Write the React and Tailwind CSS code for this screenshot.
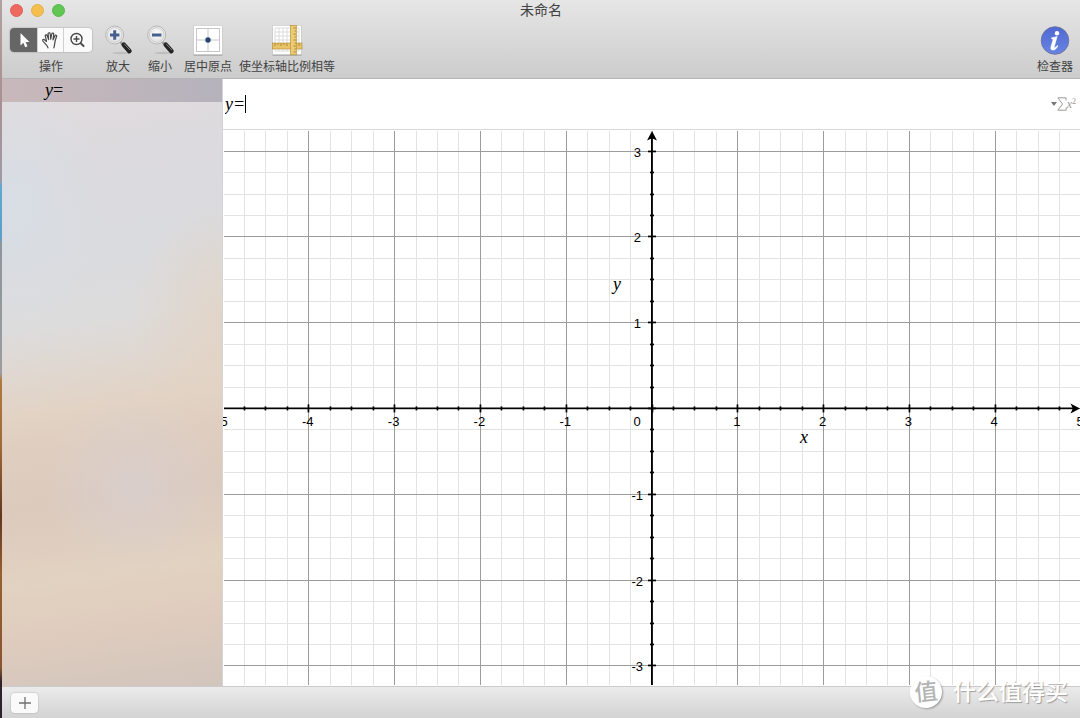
import { useState } from "react";

const UNIT = 85.8;
const WIDTH = 857;
const HEIGHT = 556;
const OX = 429;
const OY = 278;

const range = (from, to) =>
  Array.from({ length: to - from + 1 }, (_, i) => from + i);

const columns = range(-19, 19).map((n) => ({ n, pos: Math.floor(OX + (n * UNIT) / 4) }));
const rows = range(-12, 12).map((n) => ({ n, pos: Math.round(OY - (n * UNIT) / 4) }));
const isMajor = ({ n }) => n % 4 === 0;
const isMinor = ({ n }) => n % 4 !== 0;

function Graph() {
  return (
    <svg
      className="block h-full w-full"
      viewBox={`0 0 ${WIDTH} ${HEIGHT}`}
      preserveAspectRatio="xMidYMid slice"
      role="img"
      aria-label="坐标系"
    >
      <g shapeRendering="crispEdges">
        {columns.filter(isMinor).map((c) => (
          <rect key={c.n} x={c.pos} y="1" width="1" height={HEIGHT - 2} fill="#e3e3e3" />
        ))}
        {rows.filter(isMinor).map((r) => (
          <rect key={r.n} x="1" y={r.pos} width={WIDTH} height="1" fill="#e3e3e3" />
        ))}
        {columns.filter(isMajor).map((c) => (
          <rect key={c.n} x={c.pos} y="1" width="1" height={HEIGHT - 2} fill="#9c9c9c" />
        ))}
        {rows.filter(isMajor).map((r) => (
          <rect key={r.n} x="1" y={r.pos} width={WIDTH} height="1" fill="#9c9c9c" />
        ))}
      </g>
      <g fill="#000">
        <rect x={OX - 1} y="6" width="1.8" height={HEIGHT - 7} />
        <rect x="1" y={OY - 0.5} width={WIDTH - 7} height="1.7" />
        <path d={`M${OX} 1 L${OX + 5} 10.5 L${OX} 8.2 L${OX - 5} 10.5Z`} />
        <path d={`M${WIDTH} ${OY + 0.4} l-9.5 -5 l2.3 5 l-2.3 5Z`} />
        {columns.map((c) => (
          <rect
            key={c.n}
            x={c.pos - 0.4}
            y={OY + 0.4 - (isMajor(c) ? 4 : 2)}
            width="1.7"
            height={isMajor(c) ? 8 : 4}
          />
        ))}
        {rows.map((r) => (
          <rect
            key={r.n}
            x={OX - (isMajor(r) ? 4 : 2)}
            y={r.pos - 0.4}
            width={isMajor(r) ? 8 : 4}
            height="1.7"
          />
        ))}
      </g>
      <g className="font-['Liberation_Sans',Arial,sans-serif] text-[13px]" fill="#000">
        {[-5, -4, -3, -2, -1, 1, 2, 3, 4, 5].map((n) => (
          <text key={n} x={OX + n * UNIT - 1} y="296" textAnchor="middle">
            {n}
          </text>
        ))}
        <text x="414" y="296" textAnchor="middle">0</text>
        {[-3, -2, -1, 1, 2, 3].map((n) => (
          <text key={n} x={n < 0 ? 420 : 418} y={OY - n * UNIT + 6} textAnchor="end">
            {n}
          </text>
        ))}
      </g>
      <g className="font-['Liberation_Serif','Times_New_Roman',serif] text-[18px] italic" fill="#000">
        <text x="390" y="160">y</text>
        <text x="577" y="313">x</text>
      </g>
    </svg>
  );
}

function Magnifier({ plus, id }) {
  return (
    <svg className="h-8 w-8" viewBox="0 0 32 32" aria-hidden="true">
      <defs>
        <radialGradient id={id} cx="50%" cy="40%" r="60%">
          <stop offset="0" stopColor="#fff" />
          <stop offset="1" stopColor="#e0e0e0" />
        </radialGradient>
      </defs>
      <ellipse cx="19" cy="29" rx="9" ry="1.2" fill="#b5b5b5" opacity=".7" />
      <path d="M18 17.500l3.500 3.800" stroke="#999" strokeWidth="2.500" />
      <path d="M21.800 20.800l5.600 6.300" stroke="#242424" strokeWidth="4.600" strokeLinecap="round" />
      <path d="M22.500 20.200l5.200 5.600" stroke="#808080" strokeWidth="1" strokeLinecap="round" />
      <circle cx="12.700" cy="11" r="9" fill="#ececec" stroke="#b0b0b0" strokeWidth=".9" />
      <circle cx="12.700" cy="11" r="7.300" fill={`url(#${id})`} stroke="#c6c6c6" strokeWidth=".8" />
      <path d={plus ? "M8 11h9.400M12.700 6.300v9.400" : "M8 11h9.400"} stroke="#47618f" strokeWidth="3" />
    </svg>
  );
}

function OriginIcon() {
  return (
    <svg className="h-8 w-8" viewBox="0 0 32 32" aria-hidden="true">
      <rect x="1.2" y="2.800" width="29.600" height="29" rx="1" fill="#a6a6a6" />
      <rect x="1.500" y="1.500" width="29" height="29" fill="#fff" stroke="#c9c9c9" strokeWidth=".6" />
      <rect x="4.500" y="4.500" width="23" height="23" fill="none" stroke="#c6c6c6" />
      <path d="M16 4.500v23M4.500 16h23" stroke="#bdbdbd" strokeWidth=".8" />
      <circle cx="16" cy="16" r="2.700" fill="#25476d" />
    </svg>
  );
}

function RulerIcon() {
  return (
    <svg className="h-8 w-8" viewBox="0 0 32 32" aria-hidden="true">
      <rect x="1.2" y="2.800" width="29.600" height="29" rx="1" fill="#a6a6a6" />
      <rect x="1.500" y="1.500" width="29" height="29" fill="#fff" stroke="#c9c9c9" strokeWidth=".6" />
      <path
        d="M4 4h24v23h-24zM8 4v23M12 4v23M16 4v23M20 4v23M24 4v23M4 8h24M4 12h24M4 16h24M4 20h24M4 24h24"
        fill="none"
        stroke="#d4d4d4"
        strokeWidth=".8"
      />
      <rect x="1.500" y="19" width="29.500" height="6" fill="#e8c466" stroke="#b08a38" strokeWidth=".6" />
      <path d="M4 19.500v2.500M7 19.500v1.500M10 19.500v2.500M13 19.500v1.500M16 19.500v2.500M28 19.500v2.500" stroke="#8f6e28" strokeWidth=".7" />
      <rect x="19.500" y="1.300" width="6" height="29.500" fill="#eccb72" stroke="#b08a38" strokeWidth=".6" />
      <path
        d="M25 4h-2.500M25 7h-1.500M25 10h-2.500M25 13h-1.500M25 16h-2.500M25 19h-1.500M25 22h-2.500M25 25h-1.500M25 28h-2.500"
        stroke="#8f6e28"
        strokeWidth=".7"
      />
    </svg>
  );
}

function InfoIcon() {
  return (
    <svg className="h-8 w-8" viewBox="0 0 32 32" aria-hidden="true">
      <defs>
        <linearGradient id="info" x1="0" y1="0" x2="0" y2="1">
          <stop offset="0" stopColor="#5069d2" />
          <stop offset="1" stopColor="#6884e2" />
        </linearGradient>
      </defs>
      <circle cx="16" cy="16.500" r="13.800" fill="url(#info)" stroke="#6c73a0" strokeWidth=".9" />
      <circle cx="18" cy="9.200" r="2.200" fill="#fff" />
      <path
        d="M12.600 13.700c2-.3 3.900-.8 5.600-1.300l-2.700 9.500c-.3 1.200 0 1.600.5 1.500.7-.1 1.500-1 2.200-2l.8.5c-1.600 2.800-3.200 4.200-5.100 4.200-1.800 0-2.600-1.200-2-3.100l1.900-6.600c.3-1.100-.2-1.500-1.300-1.800z"
        fill="#fff"
        stroke="#fff"
        strokeWidth=".5"
      />
    </svg>
  );
}

const tools = [
  {
    id: "pointer",
    label: "选择",
    width: "w-7",
    icon: (
      <svg className="h-5 w-5" viewBox="0 0 20 20" aria-hidden="true">
        <path d="M6.500 3v12.400l2.800-2.600 1.900 4.400 2.300-1-1.900-4.300h3.900z" fill="currentColor" />
      </svg>
    ),
  },
  {
    id: "hand",
    label: "移动",
    width: "w-[26px]",
    icon: (
      <svg className="h-5 w-5" viewBox="0 0 20 20" fill="none" stroke="currentColor" strokeWidth="1.200" strokeLinecap="round" strokeLinejoin="round" aria-hidden="true">
        <path d="M7 17.800c-.4-1.700-1.700-2.900-2.800-4.100-1-1.100-1.900-2.100-2.400-3-.6-1.200.9-1.700 1.700-1 .7.600 1.300 1.300 2 1.700-.2-1.800-.8-3.500-1.200-5.200-.4-1.400 1.400-1.900 1.900-.5l1.400 3.900-.5-5.700c-.1-1.500 1.900-1.600 2.100-.1l.5 5.400 1-5.200c.3-1.400 2.200-1.100 2 .3l-.7 5.500 1.900-3.900c.6-1.200 2.200-.6 1.700.7-.8 2.100-1.500 3.700-1.700 5.800-.2 2-.6 3.500-1 5.400" />
      </svg>
    ),
  },
  {
    id: "zoom",
    label: "缩放",
    width: "w-7",
    icon: (
      <svg className="h-5 w-5" viewBox="0 0 20 20" fill="none" stroke="currentColor" aria-hidden="true">
        <circle cx="8.500" cy="9" r="5.500" strokeWidth="1.400" />
        <path d="M5.500 9h6M8.500 6v6" strokeWidth="1.400" />
        <path d="M12.500 13l3.600 3.600" strokeWidth="2" />
      </svg>
    ),
  },
];

function ToolbarButton({ label, width, children }) {
  return (
    <button type="button" className={`flex flex-col items-center gap-[3px] ${width}`}>
      {children}
      <span className="text-xs leading-4 whitespace-nowrap">{label}</span>
    </button>
  );
}

export default function App() {
  const [tool, setTool] = useState("pointer");
  const [formula, setFormula] = useState("y=");

  return (
    <div className="relative flex h-screen overflow-hidden bg-white font-['Liberation_Sans','Noto_Sans_CJK_SC',sans-serif] text-[#424242]">
      <div className="w-0.5 shrink-0 bg-[linear-gradient(#b3a0a0_0,#a98f93_14%,#a09aa5_25%,#62a8d0_26%,#5b9fca_33%,#8f959c_34%,#9a9ca0_52%,#b07a3c_53%,#a06a38_62%,#65351f_72%,#96602f_80%,#8a552e_93%,#30222a_95%,#30222a)]" />
      <div className="flex min-w-0 flex-1 flex-col">
        <header className="flex h-[79px] shrink-0 flex-col border-b border-[#b4b4b4] bg-linear-to-b from-[#e6e6e6] to-[#cccccc]">
          <div className="grid h-5 grid-cols-[1fr_auto_1fr] items-center">
            <div className="flex gap-2 pl-2">
              <button type="button" aria-label="关闭" className="h-[13px] w-[13px] rounded-full border border-[#dc6057] bg-[#ee6a60]" />
              <button type="button" aria-label="最小化" className="h-[13px] w-[13px] rounded-full border border-[#e2ae4a] bg-[#f5bf50]" />
              <button type="button" aria-label="全屏" className="h-[13px] w-[13px] rounded-full border border-[#56b84b] bg-[#62c655]" />
            </div>
            <h1 className="text-sm leading-5">未命名</h1>
          </div>
          <div className="flex items-start pt-1 pr-1.5 pl-2">
            <div className="mr-[5px] flex flex-col items-center gap-[3px]">
              <div className="flex h-8 items-center">
                <div className="flex h-6 divide-x divide-[#d0d0d0] overflow-hidden rounded bg-[#fafafa] shadow-[0_0_1px_1px_rgba(0,0,0,0.1)]" role="group" aria-label="操作">
                  {tools.map((t) => (
                    <button
                      key={t.id}
                      type="button"
                      aria-label={t.label}
                      aria-pressed={tool === t.id}
                      onClick={() => setTool(t.id)}
                      className={`flex items-center justify-center ${t.width} ${
                        tool === t.id ? "bg-[#666666] text-white" : "text-[#484848]"
                      }`}
                    >
                      {t.icon}
                    </button>
                  ))}
                </div>
              </div>
              <span className="text-xs leading-4">操作</span>
            </div>
            <ToolbarButton label="放大" width="w-[42px]">
              <Magnifier plus id="lens-in" />
            </ToolbarButton>
            <ToolbarButton label="缩小" width="w-[42px]">
              <Magnifier id="lens-out" />
            </ToolbarButton>
            <ToolbarButton label="居中原点" width="w-[54px]">
              <OriginIcon />
            </ToolbarButton>
            <ToolbarButton label="使坐标轴比例相等" width="w-[104px]">
              <RulerIcon />
            </ToolbarButton>
            <div className="flex-1" />
            <ToolbarButton label="检查器" width="w-[38px]">
              <InfoIcon />
            </ToolbarButton>
          </div>
        </header>

        <div className="flex min-h-0 flex-1">
          <aside className="w-[221px] shrink-0 border-r border-[#d4d4d8] bg-[radial-gradient(ellipse_90px_130px_at_5%_20%,rgba(214,223,230,0.75),rgba(214,223,230,0)),radial-gradient(ellipse_90px_90px_at_60%_67%,rgba(216,208,209,0.7),rgba(216,208,209,0)),radial-gradient(ellipse_90px_120px_at_100%_39%,rgba(227,210,192,0.7),rgba(227,210,192,0)),linear-gradient(172deg,#e2dcdd_0%,#dcdade_14%,#dadbdf_28%,#dddcdc_40%,#e2d3c5_53%,#dfcdbf_60%,#dccabd_68%,#e2d2c1_80%,#dfccbe_88%,#d2c5bc_100%)]">
            <button
              type="button"
              className="block h-[23px] w-full bg-linear-to-r from-[#c8b8ba] to-[#b5b2bc] pl-[43px] text-left font-['Liberation_Serif','Times_New_Roman',serif] text-lg leading-[23px] text-black"
            >
              <i>y</i>=
            </button>
          </aside>

          <main className="flex min-w-0 flex-1 flex-col">
            <div className="flex h-[51px] shrink-0 items-center border-b border-[#d9d9d9] bg-white pr-1 pl-0.5">
              <input
                aria-label="公式"
                value={formula}
                onChange={(e) => setFormula(e.target.value)}
                className="field-sizing-content min-w-0 font-['Liberation_Serif','Times_New_Roman',serif] text-lg leading-6 text-black italic caret-transparent outline-none"
              />
              <span className="h-[18px] w-px bg-black" />
              <button
                type="button"
                aria-label="公式模板"
                className="ml-auto flex items-center font-['Liberation_Serif',serif] text-[#9b9b9b]"
              >
                <svg className="h-1 w-1.5" viewBox="0 0 6 4" aria-hidden="true">
                  <path d="M0 0h6l-3 4z" fill="#777" />
                </svg>
                <svg className="h-3.5 w-2.5" viewBox="0 0 10 14" fill="none" stroke="currentColor" aria-hidden="true">
                  <path d="M9 3.500V.8H.8L5.600 7 .8 13.200h8.400v-2.700" />
                </svg>
                <span className="text-xs leading-4">
                  <i>x</i>
                  <sup className="text-[8px]">2</sup>
                </span>
              </button>
            </div>
            <div className="min-h-0 flex-1 bg-white">
              <Graph />
            </div>
          </main>
        </div>

        <footer className="flex h-8 shrink-0 items-center border-t border-[#cbcbcb] bg-linear-to-b from-[#ebebeb] to-[#d3d3d3] pl-[9px]">
          <button
            type="button"
            aria-label="添加"
            className="flex h-5 w-[27px] items-center justify-center rounded bg-[#fafafa] shadow-[0_0_1px_1px_rgba(0,0,0,0.08)]"
          >
            <svg className="h-3 w-3" viewBox="0 0 12 12" aria-hidden="true">
              <path d="M0 6h12M6 0v12" stroke="#707070" strokeWidth="1.300" />
            </svg>
          </button>
        </footer>
      </div>

      <div className="pointer-events-none absolute right-3 bottom-2.5 flex items-center gap-[11px] text-white">
        <span className="flex h-8 w-8 -rotate-6 items-center justify-center rounded-full bg-white text-[23px] leading-8 font-medium text-[#b5b5b5] shadow-[1px_1px_2px_rgba(0,0,0,0.3)]">
          值
        </span>
        <span className="text-[23px] leading-8 font-medium [text-shadow:1px_1px_1px_rgba(0,0,0,0.3)]">什么值得买</span>
      </div>
    </div>
  );
}
